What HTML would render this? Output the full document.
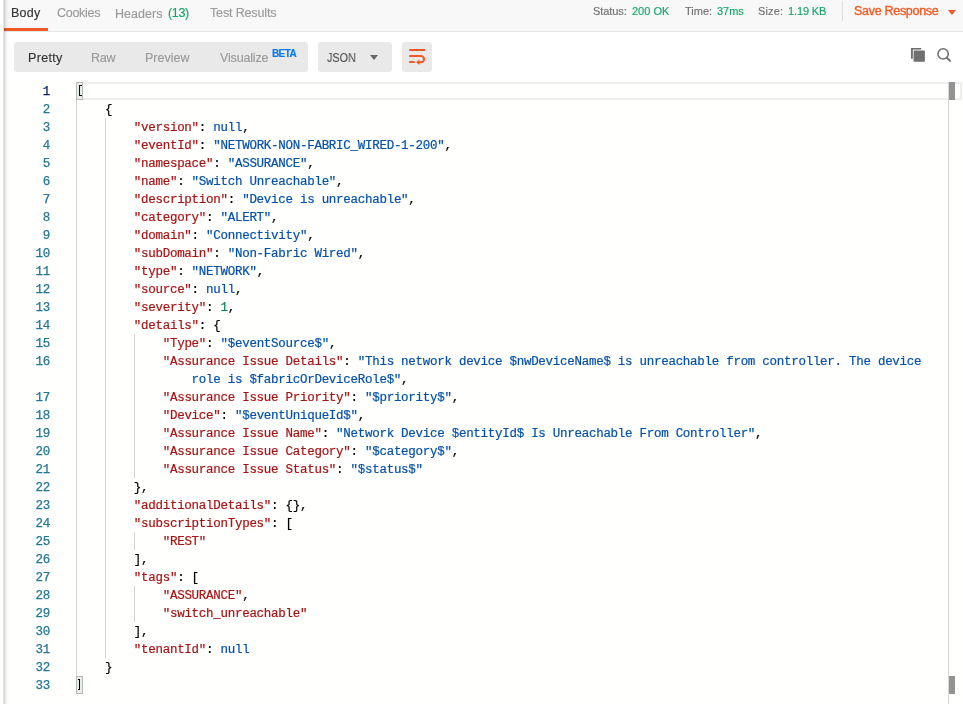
<!DOCTYPE html>
<html><head><meta charset="utf-8">
<style>
html,body{margin:0;padding:0;width:963px;height:704px;overflow:hidden;background:#fff;}
body{position:relative;font-family:"Liberation Sans",sans-serif;}
.abs{position:absolute;white-space:nowrap;}
.t,.ln,.num{will-change:transform;}
.t{position:absolute;white-space:pre;line-height:20px;height:20px;-webkit-text-stroke:0.15px currentColor;}
#hdr{position:absolute;left:4px;top:0;width:959px;height:31px;background:#f8f8f8;border-bottom:1px solid #e6e6e6;}
#ul{position:absolute;left:4px;top:28px;width:44px;height:3px;background:#f15a24;}
.tab{position:absolute;top:0;font-size:12.5px;line-height:26px;color:#808080;}
.tab.on{color:#333;}
.grn{color:#26b47f;}
.st{position:absolute;top:0;font-size:11px;line-height:24px;color:#707070;}
#sep{position:absolute;left:842px;top:1px;width:1px;height:20px;background:#e0e0e0;}
#save{position:absolute;left:853px;top:0;font-size:13px;line-height:23px;color:#f15a24;font-weight:bold;}
#tb{position:absolute;left:14px;top:42px;width:294px;height:30px;background:#e9e9e9;border-radius:3px;}
#json{position:absolute;left:318px;top:42px;width:74px;height:30px;background:#e9e9e9;border-radius:3px;}
#wrap{position:absolute;left:402px;top:42px;width:30px;height:30px;background:#e9e9e9;border-radius:3px;}
.bt{position:absolute;top:42px;font-size:12.5px;line-height:30px;color:#999;}
.bt.on{color:#333;}
#beta{position:absolute;left:272px;top:42px;font-size:9.5px;line-height:16px;font-weight:bold;color:#097bed;}
#ed{position:absolute;left:4px;top:82px;width:959px;height:622px;background:#fffffe;}
.ln{position:absolute;left:76px;height:18px;line-height:18px;font-family:"Liberation Mono",monospace;font-size:12.5px;letter-spacing:-0.277px;white-space:pre;color:#000;-webkit-text-stroke:0.2px currentColor;}
.num{position:absolute;left:4px;width:46px;text-align:right;height:18px;line-height:18px;font-family:"Liberation Mono",monospace;font-size:12.5px;letter-spacing:-0.277px;color:#237893;-webkit-text-stroke:0.25px currentColor;}
.num.act{color:#0b216f;}
.k{color:#a31515;} .v{color:#0451a5;} .n{color:#098658;}
.g{position:absolute;width:1px;background:#d3d3d3;}
#cur{position:absolute;left:76px;top:82px;width:882px;height:14px;border:2px solid #eeeeee;}
.bm{position:absolute;left:76px;width:5px;height:16px;border:1px solid #b9b9b9;background:#e5efe5;}
#ovl{position:absolute;left:948px;top:82px;width:1px;height:622px;background:#d6d6d6;}
.ovm{position:absolute;left:949px;width:6px;height:18px;background:#939393;}
#shadow{position:absolute;left:3px;top:0;width:7px;height:704px;background:linear-gradient(to right,rgba(0,0,0,0.09) 0px,rgba(0,0,0,0.15) 1.5px,rgba(0,0,0,0.06) 3px,rgba(0,0,0,0.02) 4.5px,rgba(0,0,0,0) 7px);}
</style></head><body>
<div id="hdr"></div>
<div id="ul"></div>
<div class="t" id="body" style="left:11.00px;top:3.42px;font-size:12.5px;font-weight:400;color:#333333;letter-spacing:0.240px">Body</div>
<div class="t" id="cookies" style="left:56.56px;top:3.42px;font-size:12.5px;font-weight:400;color:#9a9a9a;letter-spacing:-0.293px">Cookies</div>
<div class="t" id="headers" style="left:115.48px;top:4.08px;font-size:12.5px;font-weight:400;color:#9a9a9a;letter-spacing:0.053px">Headers</div>
<div class="t" id="h13" style="left:167.80px;top:3.44px;font-size:12.5px;font-weight:400;color:#17a468;letter-spacing:-0.347px">(13)</div>
<div class="t" id="test" style="left:209.80px;top:3.42px;font-size:12.5px;font-weight:400;color:#9a9a9a;letter-spacing:-0.145px">Test Results</div>
<div class="t" id="status" style="left:592.80px;top:1.32px;font-size:11px;font-weight:400;color:#707070;letter-spacing:-0.067px">Status:</div>
<div class="t" id="s200" style="left:631.80px;top:1.32px;font-size:11px;font-weight:400;color:#17a468;letter-spacing:0.000px">200 OK</div>
<div class="t" id="time" style="left:684.80px;top:1.32px;font-size:11px;font-weight:400;color:#707070;letter-spacing:0.000px">Time:</div>
<div class="t" id="t37" style="left:716.56px;top:1.32px;font-size:11px;font-weight:400;color:#17a468;letter-spacing:-0.053px">37ms</div>
<div class="t" id="size" style="left:758.04px;top:1.32px;font-size:11px;font-weight:400;color:#707070;letter-spacing:0.140px">Size:</div>
<div class="t" id="s119" style="left:788.42px;top:1.32px;font-size:11px;font-weight:400;color:#17a468;letter-spacing:-0.120px">1.19 KB</div>
<div class="t" id="save" style="left:853.56px;top:0.00px;font-size:12.5px;font-weight:400;color:#f15a24;letter-spacing:-0.293px;-webkit-text-stroke:0.35px #f15a24">Save Response</div>

<div id="sep"></div>
<svg class="abs" style="left:947px;top:9px" width="10" height="7" viewBox="0 0 10 7"><path d="M1 1 L9 1 L5 6 Z" fill="#f15a24"/></svg>
<div id="tb"></div>
<div class="t" id="pretty" style="left:28.00px;top:47.80px;font-size:12.5px;font-weight:400;color:#333333;letter-spacing:0.336px">Pretty</div>
<div class="t" id="raw" style="left:91.48px;top:47.80px;font-size:12.5px;font-weight:400;color:#9a9a9a;letter-spacing:-0.240px">Raw</div>
<div class="t" id="preview" style="left:145.24px;top:47.80px;font-size:12.5px;font-weight:400;color:#9a9a9a;letter-spacing:0.027px">Preview</div>
<div class="t" id="visualize" style="left:219.94px;top:48.08px;font-size:12.5px;font-weight:400;color:#9a9a9a;letter-spacing:-0.170px">Visualize</div>
<div class="t" id="beta" style="left:271.70px;top:45.82px;font-size:10px;font-weight:700;color:#097bed;letter-spacing:-0.613px">BETA</div>

<div id="json"></div>
<div class="t" id="jsontxt" style="left:326.66px;top:47.80px;font-size:12.5px;font-weight:400;color:#555555;letter-spacing:0.000px;transform:scaleX(0.865);transform-origin:0 0">JSON</div>

<svg class="abs" style="left:369px;top:54px" width="10" height="7" viewBox="0 0 10 7"><path d="M1 1 L9 1 L5 6 Z" fill="#666"/></svg>
<div id="wrap"></div>
<svg class="abs" style="left:402px;top:42px" width="30" height="30" viewBox="0 0 30 30">
<path d="M7.2 8 H23.1" stroke="#f15a24" stroke-width="2" fill="none"/>
<path d="M7.2 14 H18.9 A3.15 3.15 0 0 1 18.9 20.3 H17" stroke="#f15a24" stroke-width="2" fill="none"/>
<path d="M17.5 17.4 L14.0 20.3 L17.5 23.0 Z" fill="#f15a24"/>
<path d="M7.2 20 H12.6" stroke="#f15a24" stroke-width="2" fill="none"/>
</svg>
<svg class="abs" style="left:905px;top:42px" width="52" height="26" viewBox="0 0 52 26">
<path d="M6.9 16.7 V6.9 H16.2" stroke="#707070" stroke-width="1.9" fill="none"/>
<rect x="8.3" y="8.1" width="11.9" height="11.9" fill="none" stroke="#fff" stroke-width="0.6"/>
<rect x="8.6" y="8.4" width="11.3" height="11.3" rx="0.4" fill="#707070"/>
<circle cx="38.1" cy="11.9" r="5.15" stroke="#707070" stroke-width="1.6" fill="none"/>
<path d="M41.8 15.6 L45 18.8" stroke="#707070" stroke-width="2" stroke-linecap="round"/>
</svg>
<div id="ed"></div>
<div id="cur"></div>
<div class="g" style="left:76px;top:100px;height:576px"></div><div class="g" style="left:105px;top:118px;height:540px"></div><div class="g" style="left:134px;top:334px;height:144px"></div><div class="g" style="left:134px;top:532px;height:18px"></div><div class="g" style="left:134px;top:586px;height:36px"></div>
<div class="bm" style="top:82px"></div>
<div class="bm" style="top:676px"></div>
<div class="num act" style="top:83px">1</div><div class="num" style="top:101px">2</div><div class="num" style="top:119px">3</div><div class="num" style="top:137px">4</div><div class="num" style="top:155px">5</div><div class="num" style="top:173px">6</div><div class="num" style="top:191px">7</div><div class="num" style="top:209px">8</div><div class="num" style="top:227px">9</div><div class="num" style="top:245px">10</div><div class="num" style="top:263px">11</div><div class="num" style="top:281px">12</div><div class="num" style="top:299px">13</div><div class="num" style="top:317px">14</div><div class="num" style="top:335px">15</div><div class="num" style="top:353px">16</div><div class="num" style="top:389px">17</div><div class="num" style="top:407px">18</div><div class="num" style="top:425px">19</div><div class="num" style="top:443px">20</div><div class="num" style="top:461px">21</div><div class="num" style="top:479px">22</div><div class="num" style="top:497px">23</div><div class="num" style="top:515px">24</div><div class="num" style="top:533px">25</div><div class="num" style="top:551px">26</div><div class="num" style="top:569px">27</div><div class="num" style="top:587px">28</div><div class="num" style="top:605px">29</div><div class="num" style="top:623px">30</div><div class="num" style="top:641px">31</div><div class="num" style="top:659px">32</div><div class="num" style="top:677px">33</div>
<div class="ln" style="top:83px"></div><div class="ln" style="top:101px">    {</div><div class="ln" style="top:119px">        <span class="k">&quot;version&quot;</span>: <span class="v">null</span>,</div><div class="ln" style="top:137px">        <span class="k">&quot;eventId&quot;</span>: <span class="v">&quot;NETWORK-NON-FABRIC_WIRED-1-200&quot;</span>,</div><div class="ln" style="top:155px">        <span class="k">&quot;namespace&quot;</span>: <span class="v">&quot;ASSURANCE&quot;</span>,</div><div class="ln" style="top:173px">        <span class="k">&quot;name&quot;</span>: <span class="v">&quot;Switch Unreachable&quot;</span>,</div><div class="ln" style="top:191px">        <span class="k">&quot;description&quot;</span>: <span class="v">&quot;Device is unreachable&quot;</span>,</div><div class="ln" style="top:209px">        <span class="k">&quot;category&quot;</span>: <span class="v">&quot;ALERT&quot;</span>,</div><div class="ln" style="top:227px">        <span class="k">&quot;domain&quot;</span>: <span class="v">&quot;Connectivity&quot;</span>,</div><div class="ln" style="top:245px">        <span class="k">&quot;subDomain&quot;</span>: <span class="v">&quot;Non-Fabric Wired&quot;</span>,</div><div class="ln" style="top:263px">        <span class="k">&quot;type&quot;</span>: <span class="v">&quot;NETWORK&quot;</span>,</div><div class="ln" style="top:281px">        <span class="k">&quot;source&quot;</span>: <span class="v">null</span>,</div><div class="ln" style="top:299px">        <span class="k">&quot;severity&quot;</span>: <span class="n">1</span>,</div><div class="ln" style="top:317px">        <span class="k">&quot;details&quot;</span>: {</div><div class="ln" style="top:335px">            <span class="k">&quot;Type&quot;</span>: <span class="v">&quot;$eventSource$&quot;</span>,</div><div class="ln" style="top:353px">            <span class="k">&quot;Assurance Issue Details&quot;</span>: <span class="v">&quot;This network device $nwDeviceName$ is unreachable from controller. The device</span></div><div class="ln" style="top:371px">                <span class="v">role is $fabricOrDeviceRole$&quot;</span>,</div><div class="ln" style="top:389px">            <span class="k">&quot;Assurance Issue Priority&quot;</span>: <span class="v">&quot;$priority$&quot;</span>,</div><div class="ln" style="top:407px">            <span class="k">&quot;Device&quot;</span>: <span class="v">&quot;$eventUniqueId$&quot;</span>,</div><div class="ln" style="top:425px">            <span class="k">&quot;Assurance Issue Name&quot;</span>: <span class="v">&quot;Network Device $entityId$ Is Unreachable From Controller&quot;</span>,</div><div class="ln" style="top:443px">            <span class="k">&quot;Assurance Issue Category&quot;</span>: <span class="v">&quot;$category$&quot;</span>,</div><div class="ln" style="top:461px">            <span class="k">&quot;Assurance Issue Status&quot;</span>: <span class="v">&quot;$status$&quot;</span></div><div class="ln" style="top:479px">        },</div><div class="ln" style="top:497px">        <span class="k">&quot;additionalDetails&quot;</span>: {},</div><div class="ln" style="top:515px">        <span class="k">&quot;subscriptionTypes&quot;</span>: [</div><div class="ln" style="top:533px">            <span class="k">&quot;REST&quot;</span></div><div class="ln" style="top:551px">        ],</div><div class="ln" style="top:569px">        <span class="k">&quot;tags&quot;</span>: [</div><div class="ln" style="top:587px">            <span class="k">&quot;ASSURANCE&quot;</span>,</div><div class="ln" style="top:605px">            <span class="k">&quot;switch_unreachable&quot;</span></div><div class="ln" style="top:623px">        ],</div><div class="ln" style="top:641px">        <span class="k">&quot;tenantId&quot;</span>: <span class="v">null</span></div><div class="ln" style="top:659px">    }</div><div class="ln" style="top:677px"></div>
<div style="position:absolute;box-sizing:border-box;left:79.1px;top:85px;width:2.9px;height:10.8px;border-left:1.2px solid #111;border-top:1px solid #000;border-bottom:1px solid #000;border-radius:0.6px 0 0 0.6px"></div>
<div style="position:absolute;box-sizing:border-box;left:78px;top:679.2px;width:2.2px;height:10.6px;border-right:1.3px solid #000;border-top:1px solid #000;border-bottom:1px solid #000;border-radius:0 0.6px 0.6px 0"></div>
<div id="ovl"></div>
<div class="ovm" style="top:82px"></div>
<div class="ovm" style="top:676px"></div>
<div id="shadow"></div>
</body></html>
